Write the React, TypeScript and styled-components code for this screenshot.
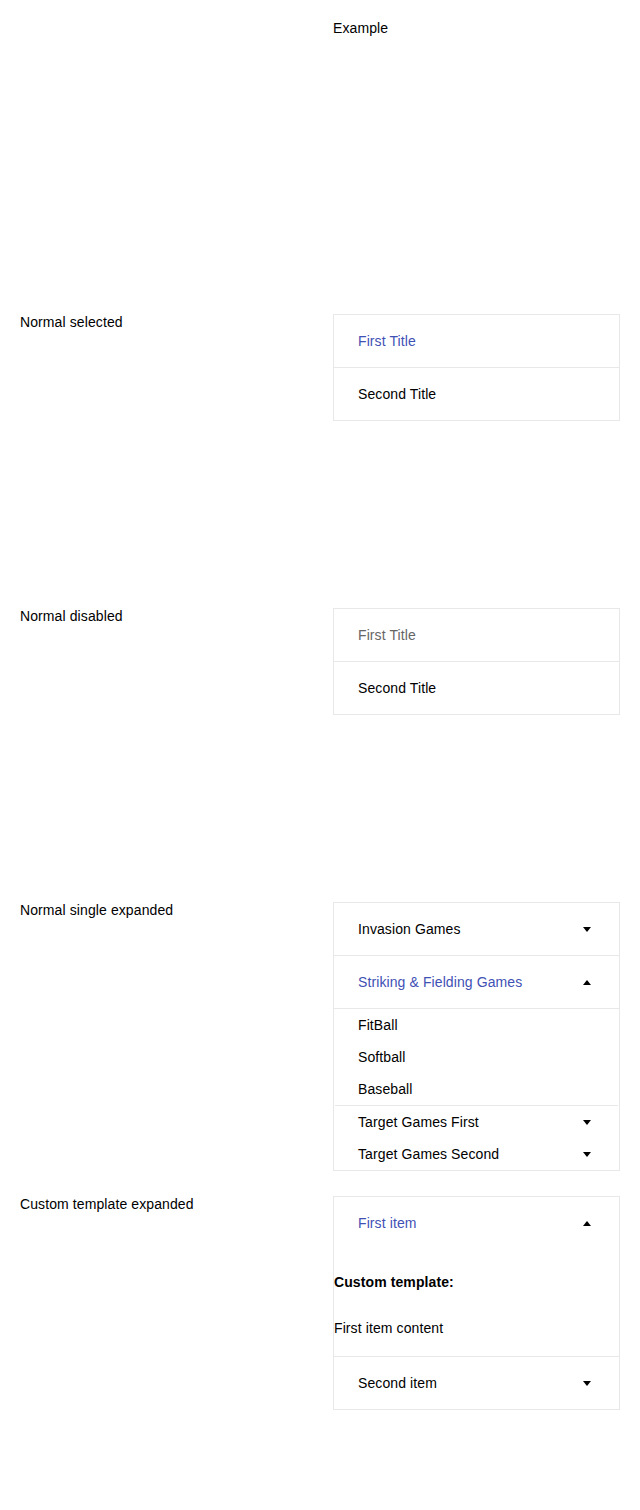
import styled, { createGlobalStyle } from 'styled-components'

const GlobalStyle = createGlobalStyle`
  body {
    margin: 0;
    background: #fff;
    font-family: 'Liberation Sans', Arial, sans-serif;
    font-size: 14px;
    letter-spacing: 0.1px;
    color: #000;
  }
`

type Item = { title: string; selected?: boolean; disabled?: boolean }

function Arrow({ up }: { up?: boolean }) {
  return (
    <ArrowBox>
      <svg width="8" height="5" viewBox="0 0 8 5">
        <path d={up ? 'M0 5 L4 0 L8 5 Z' : 'M0 0 L8 0 L4 5 Z'} fill="#000" />
      </svg>
    </ArrowBox>
  )
}

function SimpleAccordion({ items }: { items: Item[] }) {
  return (
    <Accordion>
      {items.map((it) => (
        <Header key={it.title} $selected={it.selected} $disabled={it.disabled}>
          <span>{it.title}</span>
        </Header>
      ))}
    </Accordion>
  )
}

export default function App() {
  return (
    <>
      <GlobalStyle />
      <Page>
        <Row>
          <div />
          <div>Example</div>
        </Row>
        <Row>
          <Label>Normal selected</Label>
          <SimpleAccordion items={[{ title: 'First Title', selected: true }, { title: 'Second Title' }]} />
        </Row>
        <Row>
          <Label>Normal disabled</Label>
          <SimpleAccordion items={[{ title: 'First Title', disabled: true }, { title: 'Second Title' }]} />
        </Row>
        <Row>
          <Label>Normal single expanded</Label>
          <Accordion>
            <Header>
              <span>Invasion Games</span>
              <Arrow />
            </Header>
            <Header $selected>
              <span>Striking &amp; Fielding Games</span>
              <Arrow up />
            </Header>
            <Nested>
              <SubItem>FitBall</SubItem>
              <SubItem>Softball</SubItem>
              <SubItem>Baseball</SubItem>
            </Nested>
            <Nested>
              <SubItem>
                <span>Target Games First</span>
                <Arrow />
              </SubItem>
              <SubItem>
                <span>Target Games Second</span>
                <Arrow />
              </SubItem>
            </Nested>
          </Accordion>
        </Row>
        <Row>
          <Label>Custom template expanded</Label>
          <Accordion>
            <Header $selected $plain>
              <span>First item</span>
              <Arrow up />
            </Header>
            <Custom>
              <CustomTitle>Custom template:</CustomTitle>
              <CustomText>First item content</CustomText>
            </Custom>
            <Header>
              <span>Second item</span>
              <Arrow />
            </Header>
          </Accordion>
        </Row>
      </Page>
    </>
  )
}

const Page = styled.div`
  padding: 20px;
  display: flex;
  flex-direction: column;
`

const Row = styled.div`
  display: grid;
  grid-template-columns: 313px 287px;
  height: 294px;
  align-items: start;
  line-height: 16px;
  &:last-child {
    height: 274px;
  }
`

const Label = styled.div`
  color: #000;
`

const Accordion = styled.div`
  border: 1px solid #e8e8e8;
  display: flex;
  flex-direction: column;
`

const Header = styled.div<{ $selected?: boolean; $disabled?: boolean; $plain?: boolean }>`
  height: 52px;
  padding: 0 24px;
  display: flex;
  align-items: center;
  justify-content: space-between;
  color: ${(p) => (p.$selected ? '#3f51b5' : p.$disabled ? '#666' : '#000')};
  border-bottom: ${(p) => (p.$plain ? 'none' : '1px solid #e8e8e8')};
  &:last-child {
    border-bottom: none;
  }
`

const ArrowBox = styled.span`
  width: 16px;
  height: 16px;
  display: flex;
  align-items: center;
  justify-content: center;
`

const Nested = styled.div`
  margin: 0 1px;
  border-bottom: 1px solid #e8e8e8;
  &:last-child {
    border-bottom: none;
  }
`

const SubItem = styled.div`
  height: 32px;
  padding: 0 23px;
  display: flex;
  align-items: center;
  justify-content: space-between;
`

const Custom = styled.div`
  padding: 25px 0 20px;
  border-bottom: 1px solid #e8e8e8;
`

const CustomTitle = styled.div`
  font-weight: bold;
  margin-bottom: 30px;
`

const CustomText = styled.div``
